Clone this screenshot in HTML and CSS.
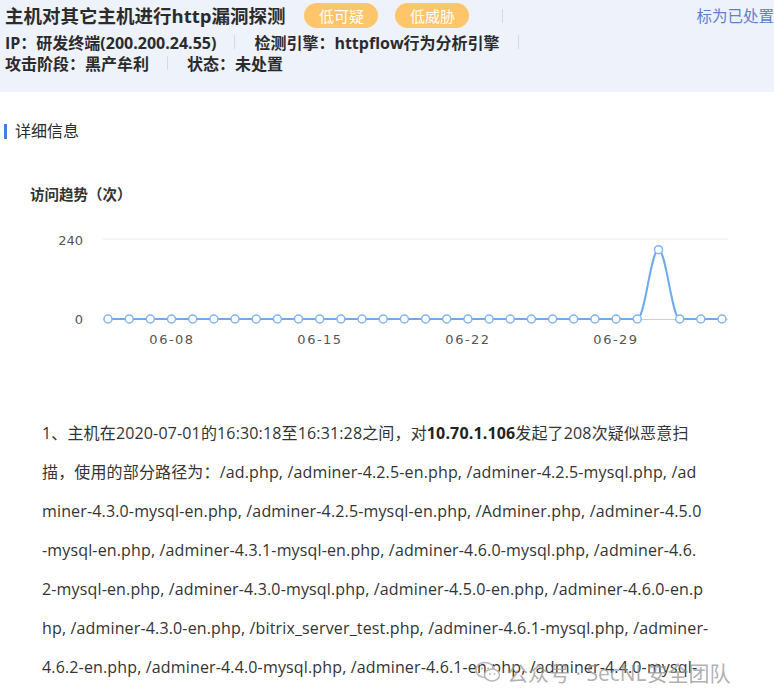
FILE: index.html
```html
<!DOCTYPE html>
<html lang="zh-CN">
<head>
<meta charset="utf-8">
<title>详细信息</title>
<link rel="stylesheet" href="styles.css">
</head>
<body>
<div class="page">
  <header class="summary">
    <div class="row title-row">
      <h1 class="title">主机对其它主机进行http漏洞探测</h1>
      <span class="badge badge-first">低可疑</span>
      <span class="badge">低威胁</span>
      <span class="sep sep-wide"></span>
      <a class="action">标为已处置</a>
    </div>
    <div class="row meta-row">
      <span class="meta">IP：研发终端(200.200.24.55)</span>
      <span class="sep"></span>
      <span class="meta">检测引擎：httpflow行为分析引擎</span>
      <span class="sep"></span>
    </div>
    <div class="row meta-row">
      <span class="meta">攻击阶段：黑产牟利</span>
      <span class="sep"></span>
      <span class="meta">状态：未处置</span>
    </div>
  </header>

  <section class="detail">
    <h2 class="section-title">详细信息</h2>
    <h3 class="chart-title">访问趋势（次）</h3>
    <svg class="chart" width="774" height="150" viewBox="0 0 774 150" xmlns="http://www.w3.org/2000/svg">
      <line x1="103" y1="34" x2="728" y2="34" stroke="#ececec" stroke-width="1"/>
      <line x1="103" y1="114.5" x2="728" y2="114.5" stroke="#cfcfcf" stroke-width="1"/>
      <g stroke="#cfcfcf" stroke-width="1">
        <line x1="172" y1="114" x2="172" y2="119"/>
        <line x1="320" y1="114" x2="320" y2="119"/>
        <line x1="468" y1="114" x2="468" y2="119"/>
        <line x1="616" y1="114" x2="616" y2="119"/>
      </g>
      <g class="ylabel">
        <text x="83" y="40" text-anchor="end">240</text>
        <text x="83" y="119" text-anchor="end">0</text>
      </g>
      <g class="xlabel">
        <text x="172" y="139" text-anchor="middle">06-08</text>
        <text x="320" y="139" text-anchor="middle">06-15</text>
        <text x="468" y="139" text-anchor="middle">06-22</text>
        <text x="616" y="139" text-anchor="middle">06-29</text>
      </g>
      <path d="M108 114 L637.3 114 C645 114 650.8 44.7 658.5 44.7 C666.2 44.7 672 114 679.7 114 L722 114" fill="none" stroke="#6ea9ec" stroke-width="2"/>
      <g fill="#fff" stroke="#80b5ef" stroke-width="1.5">
        <circle cx="108" cy="114" r="4"/><circle cx="129.2" cy="114" r="4"/><circle cx="150.3" cy="114" r="4"/>
        <circle cx="171.5" cy="114" r="4"/><circle cx="192.7" cy="114" r="4"/><circle cx="213.9" cy="114" r="4"/>
        <circle cx="235" cy="114" r="4"/><circle cx="256.2" cy="114" r="4"/><circle cx="277.4" cy="114" r="4"/>
        <circle cx="298.5" cy="114" r="4"/><circle cx="319.7" cy="114" r="4"/><circle cx="340.9" cy="114" r="4"/>
        <circle cx="362" cy="114" r="4"/><circle cx="383.2" cy="114" r="4"/><circle cx="404.4" cy="114" r="4"/>
        <circle cx="425.6" cy="114" r="4"/><circle cx="446.7" cy="114" r="4"/><circle cx="467.9" cy="114" r="4"/>
        <circle cx="489.1" cy="114" r="4"/><circle cx="510.2" cy="114" r="4"/><circle cx="531.4" cy="114" r="4"/>
        <circle cx="552.6" cy="114" r="4"/><circle cx="573.7" cy="114" r="4"/><circle cx="594.9" cy="114" r="4"/>
        <circle cx="616.1" cy="114" r="4"/><circle cx="637.3" cy="114" r="4"/><circle cx="658.5" cy="44.7" r="4"/>
        <circle cx="679.7" cy="114" r="4"/><circle cx="700.8" cy="114" r="4"/><circle cx="722" cy="114" r="4"/>
      </g>
    </svg>
    <p class="desc">1、主机在2020-07-01的16:30:18至16:31:28之间，对<b>10.70.1.106</b>发起了208次疑似恶意扫<br>描，使用的部分路径为：/ad.php, /adminer-4.2.5-en.php, /adminer-4.2.5-mysql.php, /ad<br>miner-4.3.0-mysql-en.php, /adminer-4.2.5-mysql-en.php, /Adminer.php, /adminer-4.5.0<br>-mysql-en.php, /adminer-4.3.1-mysql-en.php, /adminer-4.6.0-mysql.php, /adminer-4.6.<br>2-mysql-en.php, /adminer-4.3.0-mysql.php, /adminer-4.5.0-en.php, /adminer-4.6.0-en.p<br>hp, /adminer-4.3.0-en.php, /bitrix_server_test.php, /adminer-4.6.1-mysql.php, /adminer-<br>4.6.2-en.php, /adminer-4.4.0-mysql.php, /adminer-4.6.1-en.php, /adminer-4.4.0-mysql-</p>
  </section>

  <div class="watermark">
    <svg class="wm-icon" width="26" height="22" viewBox="0 0 26 22" xmlns="http://www.w3.org/2000/svg">
      <ellipse cx="10" cy="9" rx="9" ry="7.5" fill="none" stroke="#b8b8b8" stroke-width="1.6"/>
      <ellipse cx="17" cy="14" rx="7.5" ry="6" fill="#fff" stroke="#b8b8b8" stroke-width="1.6"/>
      <circle cx="7" cy="7.5" r="1.1" fill="#b8b8b8"/><circle cx="13" cy="7.5" r="1.1" fill="#b8b8b8"/>
      <circle cx="15" cy="13" r="0.9" fill="#b8b8b8"/><circle cx="19.5" cy="13" r="0.9" fill="#b8b8b8"/>
    </svg>
    <span>公众号 · SecNL安全团队</span>
  </div>
</div>
</body>
</html>
```

FILE: styles.css
```css
* { box-sizing: border-box; }
html, body { margin: 0; padding: 0; }
body {
  background: #fff;
  font-family: "Open Sans", "Noto Sans CJK SC", sans-serif;
  color: #333;
  overflow: hidden;
}
.page {
  position: relative;
  width: 774px;
  height: 698px;
  overflow: hidden;
}
.summary {
  background: #eef2fb;
  height: 92px;
  padding: 3px 0 0 5px;
}
.row {
  display: flex;
  align-items: center;
}
.title-row { height: 25px; }
.title {
  margin: 0;
  font-size: 18.5px;
  font-weight: 700;
  color: #2b2b2b;
  line-height: 25px;
  white-space: nowrap;
}
.badge {
  display: inline-flex;
  align-items: center;
  justify-content: center;
  height: 25px;
  width: 74px;
  margin-left: 17px;
  border-radius: 13px;
  background: #fec56a;
  color: #fff;
  font-size: 15px;
  white-space: nowrap;
}
.badge-first { margin-left: 19px; }
.sep {
  width: 1px;
  height: 14px;
  background: #d6dae3;
  margin: 0 19px 0 18px;
  flex: none;
}
.sep-wide { margin-left: 33px; }
.action {
  margin-left: auto;
  color: #5c80cf;
  font-size: 15.5px;
  white-space: nowrap;
  cursor: pointer;
}
.meta-row { height: 21px; }
.summary .row:nth-child(2) { margin-top: 3px; }
.meta {
  font-size: 16px;
  font-weight: 700;
  color: #2b2b2b;
  white-space: nowrap;
}
.detail { padding: 0; }
.section-title {
  margin: 28px 0 0 4px;
  height: 22px;
  display: flex;
  align-items: center;
  font-size: 16px;
  font-weight: 400;
  color: #2b2b2b;
  line-height: 22px;
}
.section-title::before {
  content: "";
  width: 3px;
  height: 15px;
  background: #3d82e0;
  margin-right: 8px;
}
.chart-title {
  margin: 43px 0 0 30px;
  font-size: 14.5px;
  font-weight: 700;
  color: #333;
  line-height: 20px;
}
.chart { display: block; }
.ylabel text, .xlabel text {
  font-family: "DejaVu Sans", sans-serif;
  font-size: 13px;
  fill: #555;
}
.xlabel text { letter-spacing: 1.5px; }
.desc {
  margin: 59px 0 0 42px;
  font-size: 16px;
  letter-spacing: 0.15px;
  line-height: 39px;
  color: #333;
  white-space: nowrap;
}
.desc b { font-weight: 700; color: #222; }
.watermark {
  position: absolute;
  left: 475px;
  top: 657px;
  display: flex;
  align-items: center;
  gap: 6px;
  color: rgba(150, 150, 150, 0.75);
  font-size: 21px;
  white-space: nowrap;
}
.wm-icon { flex: none; }
```
